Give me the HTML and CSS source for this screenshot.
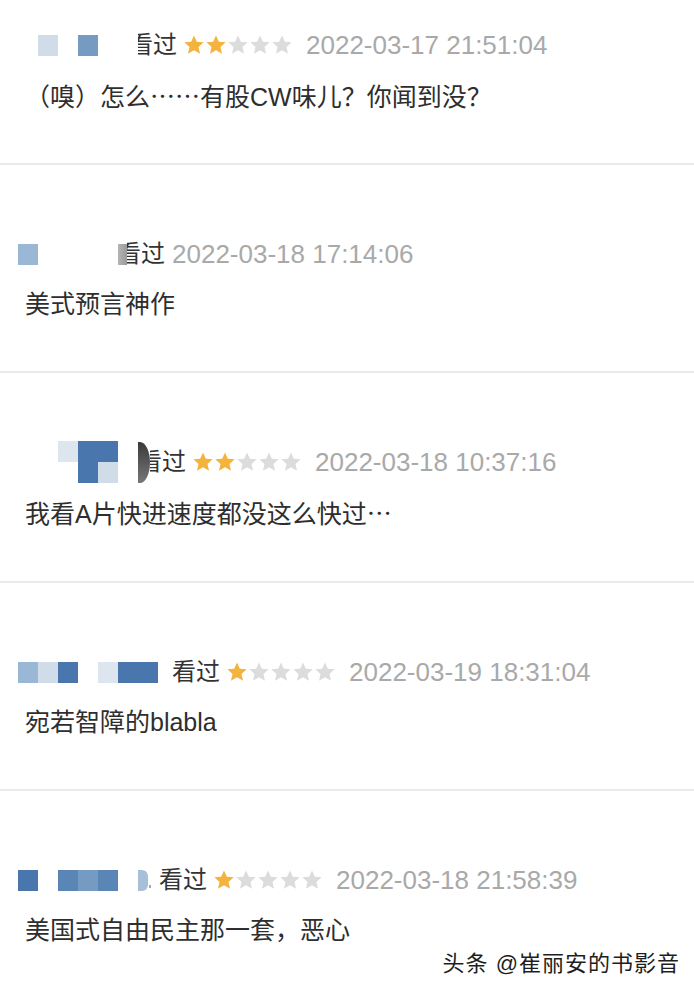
FILE: index.html
```html
<!DOCTYPE html>
<html lang="zh-CN">
<head>
    <meta charset="UTF-8">
    <meta name="viewport" content="width=device-width, initial-scale=1.0">
    <title>短评</title>
    <link rel="stylesheet" href="styles.css">
</head>
<body>

<svg width="0" height="0" class="defs">
    <symbol id="star" viewBox="0 0 24 24">
        <path d="M12 1.5l3.1 6.9 7.4.7-5.6 5 1.7 7.4L12 17.7l-6.6 3.8 1.7-7.4-5.6-5 7.4-.7z"/>
    </symbol>
</svg>

<div class="page">

    <div class="review first">
        <div class="head">
            <div class="mosaic">
                <span class="cell"></span>
                <span class="cell c-light"></span>
                <span class="cell"></span>
                <span class="cell c-mid"></span>
                <span class="cell"></span>
            </div>
            <span class="pad" style="width:20px"></span>
            <span class="clip" style="width:15px"><span style="margin-left:-9px">看</span></span><span class="label">过</span>
            <span class="stars">
                <svg class="on"><use href="#star"/></svg><svg class="on"><use href="#star"/></svg><svg><use href="#star"/></svg><svg><use href="#star"/></svg><svg><use href="#star"/></svg>
            </span>
            <span class="date">2022-03-17 21:51:04</span>
        </div>
        <p class="text">（嗅）怎么<span class="cjk">……</span>有股CW味儿？你闻到没？</p>
    </div>

    <div class="review">
        <div class="head">
            <div class="mosaic">
                <span class="cell c-soft"></span>
                <span class="cell"></span>
                <span class="cell"></span>
                <span class="cell"></span>
                <span class="cell"></span>
            </div>
            <span class="smudge"></span>
            <span class="clip" style="width:14px"><span style="margin-left:-10px">看</span></span><span class="label">过</span>
            <span class="date near">2022-03-18 17:14:06</span>
        </div>
        <p class="text">美式预言神作</p>
    </div>

    <div class="review">
        <div class="head">
            <div class="mosaic two">
                <span class="cell"></span><span class="cell"></span>
                <span class="cell"></span><span class="cell"></span>
                <span class="cell c-pale"></span><span class="cell"></span>
                <span class="cell c-dark"></span><span class="cell c-dark"></span>
                <span class="cell c-dark"></span><span class="cell c-light"></span>
                <span class="cell"></span><span class="cell"></span>
            </div>
            <span class="shade"></span>
            <span class="clip" style="width:12px"><span style="margin-left:-12px">看</span></span><span class="label">过</span>
            <span class="stars">
                <svg class="on"><use href="#star"/></svg><svg class="on"><use href="#star"/></svg><svg><use href="#star"/></svg><svg><use href="#star"/></svg><svg><use href="#star"/></svg>
            </span>
            <span class="date">2022-03-18 10:37:16</span>
        </div>
        <p class="text">我看A片快进速度都没这么快过<span class="cjk">…</span></p>
    </div>

    <div class="review">
        <div class="head">
            <div class="mosaic">
                <span class="cell c-soft"></span>
                <span class="cell c-light"></span>
                <span class="cell c-dark"></span>
                <span class="cell"></span>
                <span class="cell c-pale"></span>
                <span class="cell c-dark"></span>
                <span class="cell c-dark"></span>
            </div>
            <span class="pad" style="width:14px"></span>
            <span class="label">看过</span>
            <span class="stars">
                <svg class="on"><use href="#star"/></svg><svg><use href="#star"/></svg><svg><use href="#star"/></svg><svg><use href="#star"/></svg><svg><use href="#star"/></svg>
            </span>
            <span class="date">2022-03-19 18:31:04</span>
        </div>
        <p class="text">宛若智障的blabla</p>
    </div>

    <div class="review">
        <div class="head">
            <div class="mosaic">
                <span class="cell c-dark"></span>
                <span class="cell"></span>
                <span class="cell c-blue"></span>
                <span class="cell c-mid"></span>
                <span class="cell c-blue"></span>
                <span class="cell"></span>
            </div>
            <span class="half"></span>
            <span class="dot"></span>
            <span class="label">看过</span>
            <span class="stars">
                <svg class="on"><use href="#star"/></svg><svg><use href="#star"/></svg><svg><use href="#star"/></svg><svg><use href="#star"/></svg><svg><use href="#star"/></svg>
            </span>
            <span class="date">2022-03-18 21:58:39</span>
        </div>
        <p class="text">美国式自由民主那一套，恶心</p>
    </div>

    <div class="watermark">头条 @崔丽安的书影音</div>
</div>

</body>
</html>
```

FILE: styles.css
```css
body {
    margin: 0;
    background-color: #fff;
    font-family: "Liberation Sans", "Noto Sans CJK SC", sans-serif;
    color: #333;
}
.defs {
    position: absolute;
}
.page {
    position: relative;
    height: 988px;
    overflow: hidden;
}
.review {
    padding: 71px 0 49px 18px;
    border-top: 2px solid #ebebeb;
}
.review.first {
    padding-top: 27px;
    padding-bottom: 48px;
    border-top: none;
}
.head {
    display: flex;
    align-items: center;
    height: 36px;
    font-size: 24px;
    white-space: nowrap;
}
.mosaic {
    display: grid;
    grid-auto-flow: column;
    grid-auto-columns: 20px;
    grid-template-rows: 21px;
}
.mosaic.two {
    grid-template-rows: 21px 21px;
}
.c-pale { background-color: #dde5ef; }
.c-light { background-color: #d1dce9; }
.c-soft { background-color: #9ab8d6; }
.c-mid { background-color: #759bc3; }
.c-blue { background-color: #5a86b5; }
.c-dark { background-color: #4876ad; }
.pad {
    display: inline-block;
}
.clip {
    display: inline-block;
    overflow: hidden;
    line-height: 36px;
}
.label {
    line-height: 36px;
}
.smudge {
    width: 9px;
    height: 21px;
    background: linear-gradient(to right, #b5b5b5, #9a9a9a);
}
.shade {
    width: 12px;
    height: 41px;
    border-radius: 0 10px 10px 0 / 0 50% 50% 0;
    background: linear-gradient(to bottom, #3a3a3a, #777);
}
.half {
    width: 10px;
    height: 21px;
    border-radius: 0 6px 6px 0;
    background-color: #a8bfd9;
}
.dot {
    width: 2px;
    height: 3px;
    margin: 12px 8px 0 1px;
    background-color: #aaa;
}
.stars {
    display: flex;
    margin-left: 6px;
}
.stars svg {
    width: 22px;
    height: 22px;
    fill: #dcdcdc;
}
.stars svg.on {
    fill: #f3b33d;
}
.date {
    margin-left: 13px;
    font-size: 26px;
    color: #a9a9a9;
}
.date.near {
    margin-left: 7px;
}
.text {
    margin: 14px 0 0 7px;
    font-size: 25px;
    line-height: 36px;
    color: #2e2e2e;
}
.cjk {
    font-family: "Noto Sans CJK SC", sans-serif;
}
.watermark {
    position: absolute;
    right: 14px;
    bottom: 11px;
    font-size: 22px;
    line-height: 26px;
    letter-spacing: 1px;
    color: #1e1e1e;
    text-shadow: 0 0 2px #fff, 0 0 2px #fff;
}
```
